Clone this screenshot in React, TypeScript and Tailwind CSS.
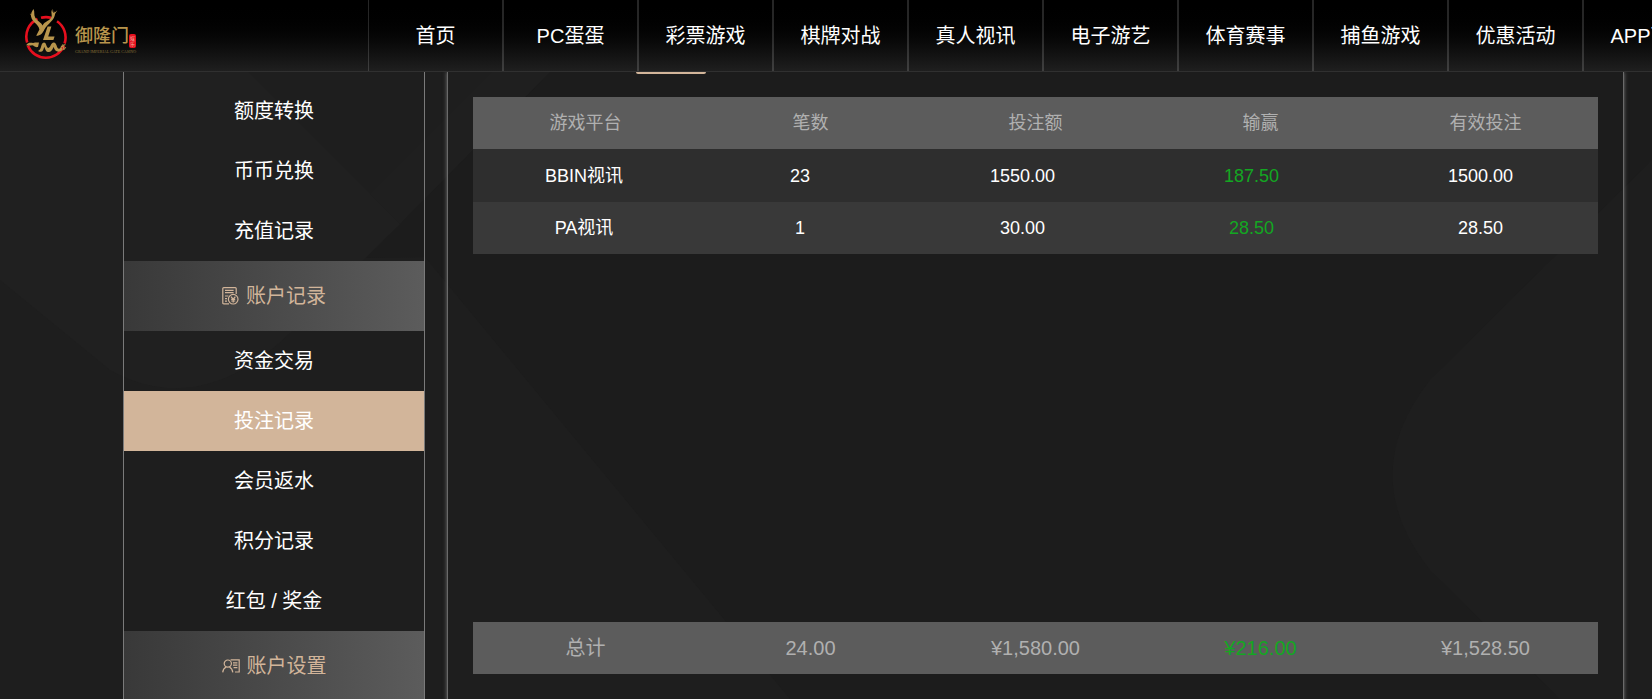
import React from "react";

const navItems = ["首页", "PC蛋蛋", "彩票游戏", "棋牌对战", "真人视讯", "电子游艺", "体育赛事", "捕鱼游戏", "优惠活动", "APP下载"];

const transferLinks = ["额度转换", "币币兑换", "充值记录"];
const recordLinks = ["资金交易", "投注记录", "会员返水", "积分记录", "红包 / 奖金"];

const columns = ["游戏平台", "笔数", "投注额", "输赢", "有效投注"];
const rows = [
  { platform: "BBIN视讯", count: "23", bet: "1550.00", result: "187.50", valid: "1500.00" },
  { platform: "PA视讯", count: "1", bet: "30.00", result: "28.50", valid: "28.50" },
];

function Logo() {
  return (
    <a href="#" aria-label="御隆门" className="flex w-[368px] shrink-0 items-start pl-6 pt-2">
      <svg width="44" height="52" viewBox="0 0 44 52" fill="none" aria-hidden="true">
        <g stroke="#e60f1e" strokeWidth="2.6">
          <path d="M13.5 11 A19.6 19.6 0 0 0 3.2 34.5" />
          <path d="M17 9.8 Q22 8.4 27 9.8" />
          <path d="M33 13.2 A19.6 19.6 0 0 1 40.6 35.5" />
          <path d="M3.8 37.5 A19.6 19.6 0 0 0 40 37.8" />
        </g>
        <g fill="#b8954c">
          <path d="M9.5 1 C11 4 9.6 7 11.2 9.5 C13 13 17 14 18.6 17.6 C20.5 13 26.2 13 27.6 8.5 C28.3 6 26.2 3.8 28.6 1 C28 4 29.6 4.6 30 5 L29.6 2.2 L31 5.2 C31.2 12.4 23.4 15.6 20.4 21.4 C19 24.6 16.6 27.8 12.2 27.8 L15.4 21.4 C14 15.4 8.2 14.4 7.2 9 C6.6 6 7.6 3.6 9.5 1 Z" />
          <path d="M5.8 5.2 L8.8 8 L7.8 9 Z M33.4 2.2 L30.2 7.2 L29.6 5.6 Z" />
          <path d="M23.6 18.6 L27.4 18.6 L24.2 28.6 L30.6 28.6 L29.4 32 L19 32 Z" />
          <path d="M2 37.4 C5 33 8.4 36 11 34.6 L15 34.6 L14 39 C10 39.8 10 36.8 7.4 37.4 C5 38 4 37 2 37.4 Z" />
          <path d="M14 43 C18 42 16.4 35 20 34.6 C22.6 34.6 22.2 40 24.4 40 C26.8 39.8 26.4 34.8 29.8 34.6 C33 34.6 32.4 40.8 35 40.8 C36.4 40.8 36.4 39 37.4 38 L38.4 42 C34 45.2 31 43.4 29.6 39 C28 42.8 26.4 44.6 23.6 44 C21.4 43.4 21.2 40.6 20.2 38.8 C19.4 43 18 45.2 14 43 Z" />
        </g>
        <path d="M37 38.4 L41.4 36.6 M38.4 41.2 L42 39.6 M38.6 36.4 L40.2 42" stroke="#b8954c" strokeWidth="1.1" />
      </svg>
      <span className="ml-[7px] flex flex-col pt-3">
        <span className="flex items-end">
          <span className="font-['Noto_Sans_CJK_SC',sans-serif] text-[18px] font-medium leading-[28px] text-[#b8954c]">御隆门</span>
          <span className="flex h-[14px] w-[7px] flex-col items-center justify-center rounded-[2px] bg-[#e60f1e] text-[5px] leading-[6px] text-[#f0b0a0]">
            <span>娱</span>
            <span>乐</span>
          </span>
        </span>
        <span className="mt-[2px] whitespace-nowrap font-['Liberation_Serif',serif] text-[4px] leading-[4px] text-[#8a7038]">GRAND IMPERIAL GATE CASINO</span>
      </span>
    </a>
  );
}

function RecordIcon() {
  return (
    <svg width="17" height="18" viewBox="0 0 17 18" fill="none" stroke="currentColor" strokeWidth="1.2" aria-hidden="true">
      <path d="M7 16.9 H1.8 Q0.8 16.9 0.8 15.9 V1.6 Q0.8 0.6 1.8 0.6 H13.2 Q14.2 0.6 14.2 1.6 V7" />
      <path d="M3 3.4 H11.6 M3 5.6 H11.6 M3 9 H6.4 M3 11.6 H5 M3 14.2 H5" />
      <circle cx="11.2" cy="12.2" r="4.8" />
      <path d="M9 9.6 L11.2 12.2 L13.4 9.6 M11.2 12.2 V15.6 M9.2 12.4 H13.2 M9.2 14 H13.2" />
    </svg>
  );
}

function ProfileIcon() {
  return (
    <svg width="18" height="14" viewBox="0 0 18 14" fill="none" stroke="currentColor" strokeWidth="1.2" aria-hidden="true">
      <circle cx="5.8" cy="4.6" r="3.6" />
      <path d="M0.7 13.4 Q1 9.6 4.2 8 M7.4 8 Q10.4 9.6 10.8 13.4" />
      <path d="M8.6 0.8 H17.2 V13 H13" />
      <path d="M11 3.8 H15.4 M11 6.2 H15.4 M11.6 8.6 H15.4" />
    </svg>
  );
}

function SideLink({ label, active = false }: { label: string; active?: boolean }) {
  return (
    <a
      href="#"
      aria-current={active ? "page" : undefined}
      className={`flex h-[60px] items-center justify-center text-xl text-white ${active ? "bg-[#d2b59a]" : ""}`}
    >
      {label}
    </a>
  );
}

function SideHeading({ icon, label }: { icon: React.ReactNode; label: string }) {
  return (
    <h2 className="flex h-[70px] items-center justify-center gap-[7px] bg-linear-to-r from-[#393939] to-[#5c5c5c] text-xl text-[#d2b59a]">
      {icon}
      {label}
    </h2>
  );
}

function Backdrop() {
  return (
    <svg className="absolute inset-0 -z-10 h-full w-full" viewBox="0 0 1652 699" preserveAspectRatio="xMidYMin slice" aria-hidden="true">
      <rect width="1652" height="699" fill="#1c1c1c" />
      <path d="M0 0 H550 V72 L365 258 L425 257 L790 699 H0 Z" fill="#1e1e1e" />
      <path d="M0 72 H248 L400 224 L290 333 Q200 420 110 370 L0 280 Z" fill="#202020" />
      <path d="M492 72 H550 L400 224 L370 194 Z" fill="#1f1f1f" />
      <path d="M1652 160 L1430 380 Q1355 475 1430 570 L1560 699 H1652 Z" fill="#1e1e1e" />
    </svg>
  );
}

export default function App() {
  return (
    <div className="relative isolate flex h-screen flex-col overflow-hidden font-['Liberation_Sans','Noto_Sans_CJK_SC',sans-serif]">
      <Backdrop />
      <header className="z-10 flex h-[72px] shrink-0 border-b border-[#303030] bg-linear-to-b from-black to-[#1f1f1f]">
        <Logo />
        <nav className="flex">
          {navItems.map((item) => (
            <a
              key={item}
              href="#"
              className="flex w-[135px] shrink-0 items-center justify-center border-x border-white/15 text-xl text-white"
            >
              {item}
            </a>
          ))}
        </nav>
      </header>

      <div className="flex flex-1 gap-[22px] pl-[123px] pr-7">
        <aside className="w-[302px] shrink-0 border-x border-[#7a7a7a] pt-[9px]">
          {transferLinks.map((label) => (
            <SideLink key={label} label={label} />
          ))}
          <SideHeading icon={<RecordIcon />} label="账户记录" />
          {recordLinks.map((label) => (
            <SideLink key={label} label={label} active={label === "投注记录"} />
          ))}
          <SideHeading icon={<ProfileIcon />} label="账户设置" />
        </aside>

        <main className="flex-1 border-x border-[#6a6a6a] px-[25px] shadow-[0_0_4px_#777777]">
          <div className="ml-[163px] h-[2px] w-[70px] rounded-b-full bg-[#d2b59a]" />

          <table className="mt-[23px] w-full table-fixed bg-[#5c5c5c] text-lg text-[#b0b0b0]">
            <thead>
              <tr className="h-[52px]">
                {columns.map((name) => (
                  <th key={name} scope="col" className="font-normal">
                    {name}
                  </th>
                ))}
              </tr>
            </thead>
          </table>

          <div className="h-[473px]">
            <table className="w-full table-fixed text-center text-lg text-white">
              <colgroup>
                <col className="w-[222px]" />
                <col className="w-[210px]" />
                <col className="w-[235px]" />
                <col className="w-[223px]" />
                <col className="w-[235px]" />
              </colgroup>
              <tbody>
                {rows.map((row) => (
                  <tr key={row.platform} className="h-[52px] odd:h-[53px] odd:bg-[#2e2e2e] even:bg-[#393939]">
                    <td>{row.platform}</td>
                    <td>{row.count}</td>
                    <td>{row.bet}</td>
                    <td className="text-[#13a722]">{row.result}</td>
                    <td>{row.valid}</td>
                  </tr>
                ))}
              </tbody>
            </table>
          </div>

          <table className="w-full table-fixed bg-[#5c5c5c] text-center text-xl text-[#b0b0b0]">
            <tbody>
              <tr className="h-[52px]">
                <th scope="row" className="font-normal">总计</th>
                <td>24.00</td>
                <td>¥1,580.00</td>
                <td className="text-[#13a722]">¥216.00</td>
                <td>¥1,528.50</td>
              </tr>
            </tbody>
          </table>
        </main>
      </div>
    </div>
  );
}
